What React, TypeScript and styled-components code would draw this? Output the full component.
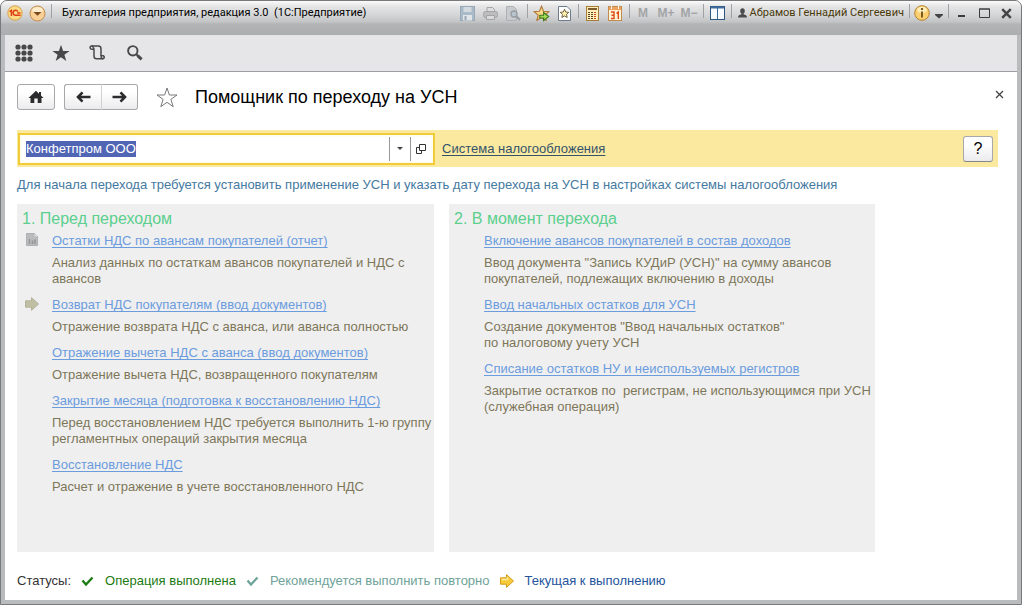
import React, { useEffect, useRef } from 'react';
import styled, { createGlobalStyle } from 'styled-components';

const GlobalStyle = createGlobalStyle`
  * { box-sizing: border-box; }
  body { margin: 0; background: #fff; }
  button { padding: 0; margin: 0; border: 0; background: none; font: inherit; color: inherit; }
  svg { display: block; }
`;

const Window = styled.div`
  min-height: 100vh;
  display: flex;
  flex-direction: column;
  border: 1px solid #77797c;
  border-radius: 7px 7px 0 0;
  background: #b9bbbd;
  font-family: "Liberation Sans", Arial, sans-serif;
  font-size: 13px;
  line-height: 16px;
  overflow: hidden;
`;

const TitleBar = styled.header`
  display: flex;
  align-items: flex-start;
  height: 34px;
  padding: 0 4px;
  background: linear-gradient(#fbfbfb 0, #e6e6e7 5px, #d4d5d6 14px, #c2c4c5 21px, #b2b4b6 23px, #acaeb0 33px);
  font-family: Roboto, Tahoma, sans-serif;
  font-size: 11px;
`;

const TitleGroup = styled.div<{ $end?: boolean }>`
  display: flex;
  align-items: center;
  height: 24px;
  flex-shrink: 0;
  margin-left: ${(p) => (p.$end ? 'auto' : '0')};
`;

const TitleButton = styled.button<{ $width?: number }>`
  width: ${(p) => p.$width ?? 23}px;
  height: 22px;
  display: flex;
  align-items: center;
  justify-content: center;
  flex-shrink: 0;
`;

const MemoryButton = styled(TitleButton)`
  font-family: "Liberation Sans", Arial, sans-serif;
  font-size: 12px;
  font-weight: bold;
  color: #a3a4a7;
`;

const Separator = styled.span`
  width: 1px;
  height: 14px;
  margin: 0 2px 4px;
  background: #a0a1a4;
`;

const AppTitle = styled.h1`
  margin: 0 0 0 8px;
  font-size: 11px;
  font-weight: normal;
  color: #000;
  white-space: pre;
`;

const User = styled.button`
  display: flex;
  align-items: center;
  gap: 3px;
  padding: 0 3px 0 4px;
  color: #4a3a0c;
  white-space: nowrap;
`;

const Client = styled.div`
  flex: 1;
  display: flex;
  flex-direction: column;
  margin: 0 4px 4px;
  background: #fff;
`;

const ToolBar = styled.nav`
  display: flex;
  height: 37px;
  background: #e6e6e8;
  border-bottom: 1px solid #9c9da0;
`;

const ToolButton = styled.button`
  width: 37px;
  height: 36px;
  display: flex;
  align-items: center;
  justify-content: center;
  color: #48484a;
`;

const Page = styled.main`
  flex: 1;
  display: flex;
  flex-direction: column;
  padding: 12px 19px 11px 12px;
`;

const PageHeader = styled.div`
  display: flex;
  align-items: center;
  height: 26px;
`;

const RaisedButton = styled.button`
  height: 26px;
  width: 38px;
  display: flex;
  align-items: center;
  justify-content: center;
  border: 1px solid #a6a8ac;
  border-radius: 3px;
  background: linear-gradient(#fff 30%, #ebebed);
  color: #2c2c2e;
`;

const HistoryButtons = styled.div`
  display: flex;
  margin: 0 18px 0 9px;
  ${RaisedButton}:first-child { border-radius: 3px 0 0 3px; border-right-color: #d0d1d4; }
  ${RaisedButton}:last-child { border-left: 0; border-radius: 0 3px 3px 0; width: 36px; }
`;

const PageTitle = styled.h2`
  margin: 0 0 0 17px;
  font-size: 18px;
  line-height: 28px;
  font-weight: normal;
  color: #000;
`;

const CloseButton = styled.button`
  width: 14px;
  height: 14px;
  margin: 0 -8px 6px auto;
  display: flex;
  align-items: center;
  justify-content: center;
  color: #4c4c4e;
`;

const OrganizationBar = styled.div`
  display: flex;
  align-items: center;
  height: 37px;
  margin-top: 20px;
  padding: 0 5px 0 1px;
  background: #fbe9a0;
`;

const ComboBox = styled.div`
  display: flex;
  align-items: stretch;
  width: 417px;
  height: 32px;
  padding: 2px;
  border: 2px solid #f0cd38;
  background: #fffdf2;
`;

const ComboInput = styled.input`
  flex: 1;
  min-width: 0;
  padding: 0 4px;
  border: 0;
  outline: 0;
  background: #fff;
  font: inherit;
  color: #333;
  &::selection { background: #5165b5; color: #fff; }
`;

const ComboButton = styled.button`
  width: 21px;
  display: flex;
  align-items: center;
  justify-content: center;
  border-left: 1px solid #999;
  background: #fff;
  color: #333;
`;

const TextLink = styled.a`
  color: #6a9cde;
  text-decoration: underline;
  text-decoration-thickness: 1px;
  text-decoration-skip-ink: none;
  text-underline-offset: 2px;
`;

const TaxLink = styled(TextLink)`
  margin-left: 7px;
  color: #33536b;
`;

const HelpButton = styled(RaisedButton)`
  width: 30px;
  margin-left: auto;
  font-size: 16px;
  color: #000;
  border-bottom-color: #85878a;
`;

const Hint = styled.p`
  margin: 10px 0 11px;
  color: #45799f;
`;

const Stages = styled.div`
  display: grid;
  grid-template-columns: minmax(0, 417px) minmax(0, 426px);
  gap: 15px;
  flex: 1;
`;

const Stage = styled.section`
  padding: 1px 3px 0 5px;
  background: #f0eff0;
`;

const StageTitle = styled.h3`
  margin: 0;
  font-size: 16px;
  line-height: 28px;
  font-weight: normal;
  color: #5bcf8d;
`;

const Step = styled.div`
  display: grid;
  grid-template-columns: 30px 1fr;
  margin-bottom: 10px;
`;

const StepIcon = styled.span`
  padding-left: 3px;
`;

const StepText = styled.p`
  margin: 6px 0 0;
  color: #7d7759;
  white-space: pre;
`;

const Legend = styled.footer`
  display: flex;
  align-items: center;
  margin-top: 21px;
  color: #333;
`;

const LegendItem = styled.span<{ $color: string }>`
  display: flex;
  align-items: center;
  gap: 11px;
  margin-left: 10px;
  color: ${(p) => p.$color};
`;

const STAR = 'M10 1.5 L12.4 7.4 L18.7 7.8 L13.9 11.9 L15.4 18.1 L10 14.7 L4.6 18.1 L6.1 11.9 L1.3 7.8 L7.6 7.4 Z';

const OneCLogo = () => (
  <svg width="16" height="16" viewBox="0 0 16 16">
    <circle cx="8" cy="8" r="7.2" fill="#fbdc86" stroke="#d9a24a" />
    <path d="M2.6 6.6 L4.4 5.4 V11 M10.8 6.6 A2.500 2.500 0 1 0 8.800 10.300 H13.600 M10.200 8 H13.600" fill="none" stroke="#dc3d18" strokeWidth="1.500" />
  </svg>
);
const MenuCircle = () => (
  <svg width="17" height="17" viewBox="0 0 17 17">
    <circle cx="8.500" cy="8.500" r="7.500" fill="#f8cf94" stroke="#c08a4c" />
    <ellipse cx="8.500" cy="5" rx="5.500" ry="3" fill="#fdeccd" />
    <path d="M4.500 7 H12.500 L8.500 10.800 Z" fill="#7a4a1c" />
  </svg>
);
const SaveIcon = () => (
  <svg width="15" height="15" viewBox="0 0 15 15">
    <rect x=".5" y=".5" width="14" height="14" fill="#a9bac8" stroke="#98a8b7" />
    <rect x="3.500" y="1" width="8" height="5" fill="#d3dae0" />
    <rect x="3" y="9" width="9" height="5.500" fill="#e2e5e8" />
    <rect x="4.500" y="10" width="2" height="4" fill="#98a8b7" />
  </svg>
);
const PrintIcon = () => (
  <svg width="15" height="15" viewBox="0 0 15 15" stroke="#a4a4a6">
    <path d="M4 6 V1.500 H9.500 L11.500 3.500 V6" fill="#dededf" />
    <rect x=".5" y="5.500" width="14" height="6" rx="2" fill="#bdbdbf" />
    <path d="M3.500 9.500 H11.500 V13.500 H3.500 Z" fill="#dadadb" />
  </svg>
);
const PreviewIcon = () => (
  <svg width="16" height="15" viewBox="0 0 16 15">
    <path d="M1.500 .5 H8.500 L11.500 3.500 V14.500 H1.500 Z" fill="#c9cccf" stroke="#aeb0b3" />
    <circle cx="9" cy="8" r="3" fill="#b9c5ce" stroke="#959ca3" strokeWidth="1.300" />
    <path d="M11.200 10.300 L15 14" stroke="#989da2" strokeWidth="2" />
  </svg>
);
const AddFavoriteIcon = () => (
  <svg width="17" height="17" viewBox="0 0 20 20">
    <path d={STAR} fill="#fbd98b" stroke="#b07638" strokeWidth="1.300" />
    <path d="M8 12 H12.500 V8.800 L18.500 13.500 L12.500 18.400 V15.300 H8 Z" fill="#a4dc58" stroke="#3d761a" strokeWidth="1.300" />
  </svg>
);
const FavoritesIcon = () => (
  <svg width="13" height="15" viewBox="0 0 13 15">
    <path d="M.5 .5 H9 L12.500 4 V14.500 H.5 Z" fill="#fff" stroke="#6d7c8c" />
    <path d="M6.500 3.200 L7.700 6 L10.800 6.300 L8.500 8.400 L9.200 11.500 L6.500 9.900 L3.800 11.500 L4.500 8.400 L2.200 6.300 L5.300 6 Z" fill="#fff0b0" stroke="#67562e" strokeWidth=".9" />
  </svg>
);
const CalculatorIcon = () => (
  <svg width="13" height="15" viewBox="0 0 13 15">
    <rect x=".5" y=".5" width="12" height="14" fill="#fff0b9" stroke="#a77b3a" />
    <rect x="2" y="2" width="9" height="2" fill="#7c5c2c" />
    <g>
      {[6, 8, 10, 12].map((y) => [2, 5, 8].map((x) => <rect key={`${x}-${y}`} x={x} y={y} width="2" height="1" fill={x === 8 ? '#d04a20' : '#5c4420'} />))}
    </g>
  </svg>
);
const CalendarIcon = () => (
  <svg width="14" height="15" viewBox="0 0 14 15">
    <rect x=".5" y=".5" width="13" height="14" fill="#fff3d6" stroke="#c28b50" />
    <rect x="1" y="1" width="12" height="3" fill="#eda35c" />
    <path d="M3.500 0 V3 M10.500 0 V3" stroke="#fff" />
    <path d="M3 6 H6 V12.500 H3 M3.500 9.200 H6 M8.500 7.500 L10.300 6 V13" fill="none" stroke="#df4a18" strokeWidth="1.400" />
  </svg>
);
const PanelsIcon = () => (
  <svg width="15" height="14" viewBox="0 0 15 14">
    <rect x=".5" y=".5" width="14" height="13" fill="#f8fbfd" stroke="#2f5680" />
    <path d="M1 1.500 H14" stroke="#3f6c9c" strokeWidth="2" />
    <path d="M7.500 2 V13" stroke="#3f6c9c" />
  </svg>
);
const UserIcon = () => (
  <svg width="9" height="10" viewBox="0 0 9 10" fill="#4b4b4d">
    <ellipse cx="4.500" cy="3" rx="2.300" ry="2.800" />
    <path d="M3.500 5 H5.500 V6.300 Q8.800 6.800 9 9.500 H0 Q.2 6.800 3.500 6.300 Z" />
  </svg>
);
const InfoIcon = () => (
  <svg width="16" height="16" viewBox="0 0 16 16">
    <circle cx="8" cy="8" r="7.300" fill="#fbd070" stroke="#b5802e" />
    <ellipse cx="8" cy="4.800" rx="5" ry="3" fill="#fdebb8" />
    <path d="M8 3 V5 M8 6.500 V12.500" stroke="#7a5a20" strokeWidth="2" />
  </svg>
);
const CaretDown = ({ w = 8 }: { w?: number }) => (
  <svg width={w} height={w / 2} viewBox="0 0 8 4"><path d="M0 0 H8 L4 4 Z" fill="#444" /></svg>
);
const InfoCaret = () => (
  <svg width="8" height="12" viewBox="0 0 8 12"><path d="M0 7 H8 V8 L4 11.500 L0 8 Z" fill="#444" /></svg>
);
const MinimizeIcon = () => (
  <svg width="8" height="12" viewBox="0 0 8 12"><path d="M0 9 H7" stroke="#3c3c3e" strokeWidth="2" /></svg>
);
const MaximizeIcon = () => (
  <svg width="11" height="10" viewBox="0 0 11 10"><path d="M.5 1 H10.500 V9.500 H.5 Z M0 1 H11" fill="none" stroke="#3c3c3e" /></svg>
);
const CloseIcon = ({ size, weight }: { size: number; weight: number }) => (
  <svg width={size} height={size} viewBox="0 0 9 9"><path d="M1 1 L8 8 M8 1 L1 8" stroke="#444446" strokeWidth={weight} /></svg>
);
const GridIcon = () => (
  <svg width="18" height="18" viewBox="0 0 18 18" fill="currentColor">
    {[3, 9, 15].map((y) => [3, 9, 15].map((x) => <circle key={`${x}-${y}`} cx={x} cy={y} r="2.600" />))}
  </svg>
);
const StarSolid = () => (
  <svg width="18" height="18" viewBox="0 0 18 18"><path d="M9 .8 L11.100 7 H17.600 L12.400 10.800 L14.300 17 L9 13.200 L3.700 17 L5.600 10.800 L.4 7 H6.900 Z" fill="currentColor" /></svg>
);
const StarOutline = () => (
  <svg width="22" height="21" viewBox="0 0 22 21"><path d="M11 1 L13.400 8 H21 L14.900 12.300 L17.200 19.700 L11 15.300 L4.800 19.700 L7.100 12.300 L1 8 H8.600 Z" fill="#fff" stroke="#77787b" /></svg>
);
const HistoryIcon = () => (
  <svg width="17" height="16" viewBox="0 0 17 16" fill="none" stroke="currentColor" strokeWidth="1.500">
    <path d="M5 4.200 H2.600 A1.600 1.600 0 1 1 4.200 2.200 Q5 3 5 5 V11 Q5 13.800 7.500 13.800 H14" />
    <path d="M2.600 1 H9.500 Q12 1 12 4 V11" />
    <path d="M12 10.800 H14.500 A1.500 1.500 0 1 1 13 13.400 Q12 12.500 12 10.500" />
  </svg>
);
const SearchIcon = () => (
  <svg width="16" height="16" viewBox="0 0 16 16" fill="none" stroke="currentColor">
    <circle cx="5.800" cy="5.800" r="4.700" strokeWidth="1.900" />
    <path d="M9.300 9.300 L11 11" strokeWidth="2" />
    <path d="M10.600 10.600 L14.600 14.400" strokeWidth="3" />
  </svg>
);
const HomeIcon = () => (
  <svg width="16" height="14" viewBox="0 0 16 14" fill="currentColor">
    <path d="M8 .8 L11 3.700 V2 H13 V5.500 L15.500 8 H13.500 V13 H9.700 V8.500 H6.300 V13 H2.500 V8 H.5 Z" />
  </svg>
);
const ArrowIcon = ({ back }: { back?: boolean }) => (
  <svg width="15" height="12" viewBox="0 0 15 12">
    <path d={back ? 'M14.500 6 H3 M6.500 1.300 L2 6 L6.500 10.700' : 'M.5 6 H12 M8.500 1.300 L13 6 L8.500 10.700'} fill="none" stroke="currentColor" strokeWidth="2.600" />
  </svg>
);
const OpenIcon = () => (
  <svg width="10" height="10" viewBox="0 0 10 10" fill="none" stroke="#333">
    <path d="M3.500 .5 H9.500 V6.500 H3.500 Z M3 3.500 H.5 V9.500 H5.500 V7" />
  </svg>
);
const ReportIcon = () => (
  <svg width="14" height="14" viewBox="0 0 14 14">
    <path d="M1.500 .5 H9.500 L12.500 3.500 V12.500 H1.500 Z" fill="#b9bbbd" stroke="#adafb1" />
    <path d="M9.500 .5 V3.500 H12.500" fill="#dcdddd" />
    <path d="M4.500 6 V11 M7.500 7.500 V11 M10 6.500 V11" stroke="#939597" strokeWidth="1.500" />
  </svg>
);
const BlockArrow = ({ active }: { active?: boolean }) => (
  <svg width="14" height="14" viewBox="0 0 14 14">
    <path d="M.5 3.800 H6.500 V.6 L13.500 7 L6.500 13.400 V10.200 H.5 Z" fill={active ? '#f8cb38' : '#c0bfa4'} stroke={active ? '#d19b1c' : '#b3b298'} strokeLinejoin="round" />
    {active && <path d="M1.500 5.500 H7.500 V3" fill="none" stroke="#fde89a" strokeWidth="1.500" />}
  </svg>
);
const CheckIcon = () => (
  <svg width="13" height="11" viewBox="0 0 13 11"><path d="M1.500 4.500 L5 8.500 L11.500 1.500" fill="none" stroke="currentColor" strokeWidth="2.300" /></svg>
);

interface StepData { link: string; text: string; icon?: React.ReactNode }

const before: StepData[] = [
  { link: 'Остатки НДС по авансам покупателей (отчет)', text: 'Анализ данных по остаткам авансов покупателей и НДС с\nавансов', icon: <ReportIcon /> },
  { link: 'Возврат НДС покупателям (ввод документов)', text: 'Отражение возврата НДС с аванса, или аванса полностью', icon: <BlockArrow /> },
  { link: 'Отражение вычета НДС с аванса (ввод документов)', text: 'Отражение вычета НДС, возвращенного покупателям' },
  { link: 'Закрытие месяца (подготовка к восстановлению НДС)', text: 'Перед восстановлением НДС требуется выполнить 1-ю группу\nрегламентных операций закрытия месяца' },
  { link: 'Восстановление НДС', text: 'Расчет и отражение в учете восстановленного НДС' },
];

const during: StepData[] = [
  { link: 'Включение авансов покупателей в состав доходов', text: 'Ввод документа "Запись КУДиР (УСН)" на сумму авансов\nпокупателей, подлежащих включению в доходы' },
  { link: 'Ввод начальных остатков для УСН', text: 'Создание документов "Ввод начальных остатков"\nпо налоговому учету УСН' },
  { link: 'Списание остатков НУ и неиспользуемых регистров', text: 'Закрытие остатков по  регистрам, не использующимся при УСН\n(служебная операция)' },
];

const StageView = ({ title, steps }: { title: string; steps: StepData[] }) => (
  <Stage>
    <StageTitle>{title}</StageTitle>
    {steps.map((s) => (
      <Step key={s.link}>
        <StepIcon>{s.icon}</StepIcon>
        <div>
          <TextLink href="#">{s.link}</TextLink>
          <StepText>{s.text}</StepText>
        </div>
      </Step>
    ))}
  </Stage>
);

export default function App() {
  const organization = useRef<HTMLInputElement>(null);
  useEffect(() => {
    organization.current?.focus();
    organization.current?.select();
  }, []);

  return (
    <>
      <GlobalStyle />
      <Window>
        <TitleBar>
          <TitleGroup>
            <TitleButton $width={20} aria-label="1С"><OneCLogo /></TitleButton>
            <TitleButton $width={24} aria-label="Главное меню"><MenuCircle /></TitleButton>
            <Separator />
            <AppTitle>Бухгалтерия предприятия, редакция 3.0  (1С:Предприятие)</AppTitle>
          </TitleGroup>
          <TitleGroup $end>
            <TitleButton aria-label="Сохранить"><SaveIcon /></TitleButton>
            <TitleButton aria-label="Печать"><PrintIcon /></TitleButton>
            <TitleButton aria-label="Просмотр"><PreviewIcon /></TitleButton>
            <Separator />
            <TitleButton aria-label="Добавить в избранное"><AddFavoriteIcon /></TitleButton>
            <TitleButton aria-label="Избранное"><FavoritesIcon /></TitleButton>
            <Separator />
            <TitleButton aria-label="Калькулятор"><CalculatorIcon /></TitleButton>
            <TitleButton aria-label="Календарь"><CalendarIcon /></TitleButton>
            <Separator />
            <MemoryButton>M</MemoryButton>
            <MemoryButton>M+</MemoryButton>
            <MemoryButton>M−</MemoryButton>
            <Separator />
            <TitleButton aria-label="Панели"><PanelsIcon /></TitleButton>
            <Separator />
            <User><UserIcon />Абрамов Геннадий Сергеевич</User>
            <Separator />
            <TitleButton $width={20} aria-label="Информация"><InfoIcon /></TitleButton>
            <TitleButton $width={14} aria-label="Ещё"><InfoCaret /></TitleButton>
            <Separator />
            <TitleButton $width={22} aria-label="Свернуть"><MinimizeIcon /></TitleButton>
            <TitleButton $width={22} aria-label="Развернуть"><MaximizeIcon /></TitleButton>
            <TitleButton $width={22} aria-label="Закрыть окно"><CloseIcon size={11} weight={2} /></TitleButton>
          </TitleGroup>
        </TitleBar>
        <Client>
          <ToolBar>
            <ToolButton aria-label="Разделы"><GridIcon /></ToolButton>
            <ToolButton aria-label="Избранное"><StarSolid /></ToolButton>
            <ToolButton aria-label="История"><HistoryIcon /></ToolButton>
            <ToolButton aria-label="Поиск"><SearchIcon /></ToolButton>
          </ToolBar>
          <Page>
            <PageHeader>
              <RaisedButton aria-label="Домой"><HomeIcon /></RaisedButton>
              <HistoryButtons>
                <RaisedButton aria-label="Назад"><ArrowIcon back /></RaisedButton>
                <RaisedButton aria-label="Вперёд"><ArrowIcon /></RaisedButton>
              </HistoryButtons>
              <button aria-label="В избранное"><StarOutline /></button>
              <PageTitle>Помощник по переходу на УСН</PageTitle>
              <CloseButton aria-label="Закрыть"><CloseIcon size={9} weight={1.3} /></CloseButton>
            </PageHeader>
            <OrganizationBar>
              <ComboBox>
                <ComboInput ref={organization} aria-label="Организация" defaultValue="Конфетпром ООО" />
                <ComboButton aria-label="Выбрать"><CaretDown w={6} /></ComboButton>
                <ComboButton aria-label="Открыть"><OpenIcon /></ComboButton>
              </ComboBox>
              <TaxLink href="#">Система налогообложения</TaxLink>
              <HelpButton>?</HelpButton>
            </OrganizationBar>
            <Hint>Для начала перехода требуется установить применение УСН и указать дату перехода на УСН в настройках системы налогообложения</Hint>
            <Stages>
              <StageView title="1. Перед переходом" steps={before} />
              <StageView title="2. В момент перехода" steps={during} />
            </Stages>
            <Legend>
              Статусы:
              <LegendItem $color="#1c7a12"><CheckIcon />Операция выполнена</LegendItem>
              <LegendItem $color="#6fa39a"><CheckIcon />Рекомендуется выполнить повторно</LegendItem>
              <LegendItem $color="#25549c"><BlockArrow active />Текущая к выполнению</LegendItem>
            </Legend>
          </Page>
        </Client>
      </Window>
    </>
  );
}
